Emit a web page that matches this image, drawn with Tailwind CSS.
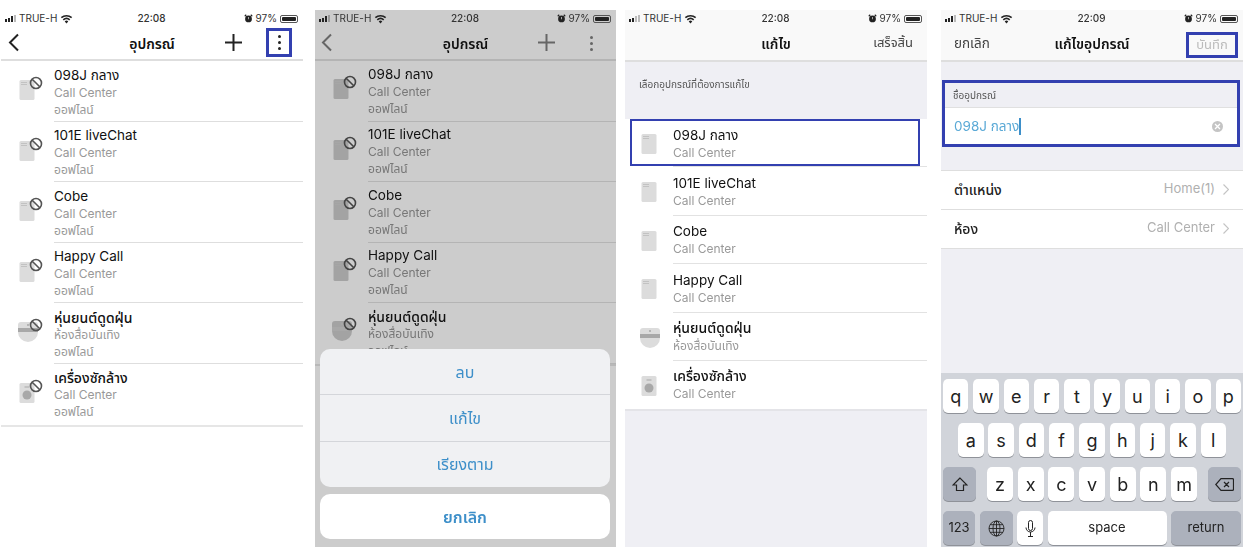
<!DOCTYPE html>
<html lang="th">
<head>
<meta charset="UTF-8">
<title>อุปกรณ์</title>
<script src="https://cdn.jsdelivr.net/npm/@tailwindcss/browser@4"></script>
</head>
<body class="bg-white overflow-hidden font-['Inter','Noto_Sans','Noto_Sans_Thai','DejaVu_Sans',sans-serif]">
<svg class="absolute w-0 h-0">
  <symbol id="plug" viewBox="0 0 24 24">
    <rect x="3.500" y="2" width="15" height="20" rx="1.500" fill="currentColor"/>
    <path d="M5.500 4.500h1M7.500 4.500h1M9.500 4.500h1M5.500 6.500h1M7.500 6.500h1M9.500 6.500h1" stroke="#a8a8a8" stroke-width="1"/>
  </symbol>
  <symbol id="robot" viewBox="0 0 24 24">
    <path d="M2 5a3 3 0 0 1 3-3h14a3 3 0 0 1 3 3v7a10 10 0 0 1-20 0z" fill="currentColor"/>
    <rect x="2" y="8" width="20" height="4" fill="#a8a8a8"/>
    <circle cx="12" cy="5" r="1" fill="#a8a8a8"/>
  </symbol>
  <symbol id="washer" viewBox="0 0 24 24">
    <rect x="3.500" y="2" width="15" height="20" rx="1.500" fill="currentColor"/>
    <circle cx="11" cy="14" r="4.500" fill="#a8a8a8"/>
    <path d="M8.500 6h5" stroke="#a8a8a8" stroke-width="1"/>
  </symbol>
  <symbol id="ban" viewBox="0 0 14 14">
    <circle cx="7" cy="7" r="5.500" fill="none" stroke="currentColor" stroke-width="1.600"/>
    <path d="M3.200 3.200l7.600 7.600" stroke="currentColor" stroke-width="1.600"/>
  </symbol>
  <symbol id="wifi" viewBox="0 0 16 12">
    <path d="M8 11.500L5.800 9a3.200 3.200 0 0 1 4.400 0zM4.700 7.800L3.400 6.300a7 7 0 0 1 9.200 0l-1.300 1.500a5 5 0 0 0-6.600 0zM2.300 5.100L1 3.600a10.700 10.700 0 0 1 14 0l-1.300 1.500a8.700 8.700 0 0 0-11.400 0z" fill="currentColor"/>
  </symbol>
  <symbol id="alarm" viewBox="0 0 12 12">
    <circle cx="6" cy="6.500" r="4.500" fill="currentColor"/>
    <path d="M1 3l2-2M11 3L9 1" stroke="currentColor" stroke-width="1.500"/>
    <path d="M6 4v3" stroke="#fff" stroke-width=".8"/>
  </symbol>
</svg>

<div class="flex items-start pt-[10px] pl-[1px] h-[551px] blur-[0.4px]">

  <!-- Screen 1: device list -->
  <section class="w-[302px] h-[537px] bg-white shrink-0">
    <div class="h-[17px] pl-[4px] pr-[5px] flex items-center justify-between text-[10px] text-[#333]">
      <div class="flex items-center gap-[3px] w-[100px]">
        <div class="flex items-end gap-[1px] h-[7px]"><i class="w-[2px] h-[3px] bg-[#222]"></i><i class="w-[2px] h-[4px] bg-[#222]"></i><i class="w-[2px] h-[6px] bg-[#222]"></i><i class="w-[2px] h-[7px] bg-[#bbb]"></i></div>
        <span>TRUE-H</span>
        <svg class="w-[13px] h-[10px] text-[#222]"><use href="#wifi"/></svg>
      </div>
      <span class="font-medium">22:08</span>
      <div class="flex items-center justify-end gap-[3px] w-[100px]">
        <svg class="w-[9px] h-[9px] text-[#222]"><use href="#alarm"/></svg>
        <span>97%</span>
        <div class="w-[18px] h-[8px] border border-[#555] rounded-[2px] p-[1px]"><div class="h-full bg-[#222] rounded-[1px]"></div></div>
      </div>
    </div>
    <div class="relative h-[34px] flex items-center justify-center border-b-2 border-[#dedede] text-[14px] font-semibold text-[#111]">
      <svg class="absolute left-[7px] top-[6px] w-[11px] h-[19px]" viewBox="0 0 11 19" fill="none" stroke="#222" stroke-width="2"><path d="M10 1.500L2 9.500l8 8"/></svg>
      <span>อุปกรณ์</span>
      <svg class="absolute left-[224px] top-[7px] w-[17px] h-[17px]" viewBox="0 0 17 17" stroke="#222" stroke-width="2"><path d="M8.500 0v17M0 8.500h17"/></svg>
      <div class="absolute left-[265px] top-[1px] w-[26px] h-[29px] border-[3px] border-[#3340b0] flex flex-col items-center justify-center gap-[3px]">
        <i class="w-[3px] h-[3px] rounded-full bg-[#222]"></i><i class="w-[3px] h-[3px] rounded-full bg-[#222]"></i><i class="w-[3px] h-[3px] rounded-full bg-[#222]"></i>
      </div>
    </div>
    <ul class="border-b-2 border-[#e6e6e6]">
      <li class="flex h-[60.600px]"><div class="relative w-[53px] shrink-0 text-[#dcdcdc]"><svg class="absolute left-[15px] top-[17px] w-[24px] h-[24px]"><use href="#plug"/></svg><svg class="absolute left-[28px] top-[15px] w-[14px] h-[14px] text-[#555]"><use href="#ban"/></svg></div><div class="flex-1 border-b border-[#dedede] pt-[5.500px] leading-[17px]"><p class="text-[13.500px] text-[#111]">098J กลาง</p><p class="text-[12px] text-[#999]">Call Center</p><p class="text-[12px] text-[#999]">ออฟไลน์</p></div></li>
      <li class="flex h-[60.600px]"><div class="relative w-[53px] shrink-0 text-[#dcdcdc]"><svg class="absolute left-[15px] top-[17px] w-[24px] h-[24px]"><use href="#plug"/></svg><svg class="absolute left-[28px] top-[15px] w-[14px] h-[14px] text-[#555]"><use href="#ban"/></svg></div><div class="flex-1 border-b border-[#dedede] pt-[5.500px] leading-[17px]"><p class="text-[13.500px] text-[#111]">101E liveChat</p><p class="text-[12px] text-[#999]">Call Center</p><p class="text-[12px] text-[#999]">ออฟไลน์</p></div></li>
      <li class="flex h-[60.600px]"><div class="relative w-[53px] shrink-0 text-[#dcdcdc]"><svg class="absolute left-[15px] top-[17px] w-[24px] h-[24px]"><use href="#plug"/></svg><svg class="absolute left-[28px] top-[15px] w-[14px] h-[14px] text-[#555]"><use href="#ban"/></svg></div><div class="flex-1 border-b border-[#dedede] pt-[5.500px] leading-[17px]"><p class="text-[13.500px] text-[#111]">Cobe</p><p class="text-[12px] text-[#999]">Call Center</p><p class="text-[12px] text-[#999]">ออฟไลน์</p></div></li>
      <li class="flex h-[60.600px]"><div class="relative w-[53px] shrink-0 text-[#dcdcdc]"><svg class="absolute left-[15px] top-[17px] w-[24px] h-[24px]"><use href="#plug"/></svg><svg class="absolute left-[28px] top-[15px] w-[14px] h-[14px] text-[#555]"><use href="#ban"/></svg></div><div class="flex-1 border-b border-[#dedede] pt-[5.500px] leading-[17px]"><p class="text-[13.500px] text-[#111]">Happy Call</p><p class="text-[12px] text-[#999]">Call Center</p><p class="text-[12px] text-[#999]">ออฟไลน์</p></div></li>
      <li class="flex h-[60.600px]"><div class="relative w-[53px] shrink-0 text-[#dcdcdc]"><svg class="absolute left-[15px] top-[17px] w-[24px] h-[24px]"><use href="#robot"/></svg><svg class="absolute left-[28px] top-[15px] w-[14px] h-[14px] text-[#555]"><use href="#ban"/></svg></div><div class="flex-1 border-b border-[#dedede] pt-[5.500px] leading-[17px]"><p class="text-[14px] font-medium text-[#111]">หุ่นยนต์ดูดฝุ่น</p><p class="text-[12px] text-[#999]">ห้องสื่อบันเทิง</p><p class="text-[12px] text-[#999]">ออฟไลน์</p></div></li>
      <li class="flex h-[60.600px]"><div class="relative w-[53px] shrink-0 text-[#dcdcdc]"><svg class="absolute left-[15px] top-[17px] w-[24px] h-[24px]"><use href="#washer"/></svg><svg class="absolute left-[28px] top-[15px] w-[14px] h-[14px] text-[#555]"><use href="#ban"/></svg></div><div class="flex-1 pt-[5.500px] leading-[17px]"><p class="text-[14px] font-medium text-[#111]">เครื่องซักล้าง</p><p class="text-[12px] text-[#999]">Call Center</p><p class="text-[12px] text-[#999]">ออฟไลน์</p></div></li>
    </ul>
  </section>

  <!-- Screen 2: action sheet over dimmed list -->
  <section class="relative ml-[12px] w-[301px] h-[537px] bg-[#cccccc] shrink-0 overflow-hidden">
    <div class="h-[17px] pl-[4px] pr-[5px] flex items-center justify-between text-[10px] text-[#333]">
      <div class="flex items-center gap-[3px] w-[100px]">
        <div class="flex items-end gap-[1px] h-[7px]"><i class="w-[2px] h-[3px] bg-[#222]"></i><i class="w-[2px] h-[4px] bg-[#222]"></i><i class="w-[2px] h-[6px] bg-[#222]"></i><i class="w-[2px] h-[7px] bg-[#999]"></i></div>
        <span>TRUE-H</span>
        <svg class="w-[13px] h-[10px] text-[#222]"><use href="#wifi"/></svg>
      </div>
      <span class="font-medium">22:08</span>
      <div class="flex items-center justify-end gap-[3px] w-[100px]">
        <svg class="w-[9px] h-[9px] text-[#222]"><use href="#alarm"/></svg>
        <span>97%</span>
        <div class="w-[18px] h-[8px] border border-[#555] rounded-[2px] p-[1px]"><div class="h-full bg-[#222] rounded-[1px]"></div></div>
      </div>
    </div>
    <div class="relative h-[34px] flex items-center justify-center border-b-2 border-[#b4b4b4] text-[14px] font-semibold text-[#111]">
      <svg class="absolute left-[6px] top-[6px] w-[11px] h-[19px]" viewBox="0 0 11 19" fill="none" stroke="#666" stroke-width="2"><path d="M10 1.500L2 9.500l8 8"/></svg>
      <span>อุปกรณ์</span>
      <svg class="absolute left-[223px] top-[7px] w-[17px] h-[17px]" viewBox="0 0 17 17" stroke="#666" stroke-width="2"><path d="M8.500 0v17M0 8.500h17"/></svg>
      <div class="absolute left-[275px] top-[9px] flex flex-col items-center gap-[3px]">
        <i class="w-[3px] h-[3px] rounded-full bg-[#666]"></i><i class="w-[3px] h-[3px] rounded-full bg-[#666]"></i><i class="w-[3px] h-[3px] rounded-full bg-[#666]"></i>
      </div>
    </div>
    <ul class="border-b-2 border-[#b8b8b8]">
      <li class="flex h-[60.500px]"><div class="relative w-[53px] shrink-0 text-[#a3a3a3]"><svg class="absolute left-[15px] top-[16px] w-[24px] h-[24px]"><use href="#plug"/></svg><svg class="absolute left-[28px] top-[14px] w-[14px] h-[14px] text-[#444]"><use href="#ban"/></svg></div><div class="flex-1 border-b border-[#b4b4b4] pt-[4.500px] leading-[17px]"><p class="text-[13.500px] text-[#111]">098J กลาง</p><p class="text-[12px] text-[#777]">Call Center</p><p class="text-[12px] text-[#777]">ออฟไลน์</p></div></li>
      <li class="flex h-[60.500px]"><div class="relative w-[53px] shrink-0 text-[#a3a3a3]"><svg class="absolute left-[15px] top-[16px] w-[24px] h-[24px]"><use href="#plug"/></svg><svg class="absolute left-[28px] top-[14px] w-[14px] h-[14px] text-[#444]"><use href="#ban"/></svg></div><div class="flex-1 border-b border-[#b4b4b4] pt-[4.500px] leading-[17px]"><p class="text-[13.500px] text-[#111]">101E liveChat</p><p class="text-[12px] text-[#777]">Call Center</p><p class="text-[12px] text-[#777]">ออฟไลน์</p></div></li>
      <li class="flex h-[60.500px]"><div class="relative w-[53px] shrink-0 text-[#a3a3a3]"><svg class="absolute left-[15px] top-[16px] w-[24px] h-[24px]"><use href="#plug"/></svg><svg class="absolute left-[28px] top-[14px] w-[14px] h-[14px] text-[#444]"><use href="#ban"/></svg></div><div class="flex-1 border-b border-[#b4b4b4] pt-[4.500px] leading-[17px]"><p class="text-[13.500px] text-[#111]">Cobe</p><p class="text-[12px] text-[#777]">Call Center</p><p class="text-[12px] text-[#777]">ออฟไลน์</p></div></li>
      <li class="flex h-[60.500px]"><div class="relative w-[53px] shrink-0 text-[#a3a3a3]"><svg class="absolute left-[15px] top-[16px] w-[24px] h-[24px]"><use href="#plug"/></svg><svg class="absolute left-[28px] top-[14px] w-[14px] h-[14px] text-[#444]"><use href="#ban"/></svg></div><div class="flex-1 border-b border-[#b4b4b4] pt-[4.500px] leading-[17px]"><p class="text-[13.500px] text-[#111]">Happy Call</p><p class="text-[12px] text-[#777]">Call Center</p><p class="text-[12px] text-[#777]">ออฟไลน์</p></div></li>
      <li class="flex h-[60.500px]"><div class="relative w-[53px] shrink-0 text-[#a3a3a3]"><svg class="absolute left-[15px] top-[16px] w-[24px] h-[24px]"><use href="#robot"/></svg><svg class="absolute left-[28px] top-[14px] w-[14px] h-[14px] text-[#444]"><use href="#ban"/></svg></div><div class="flex-1 border-b border-[#b4b4b4] pt-[4.500px] leading-[17px]"><p class="text-[14px] font-medium text-[#111]">หุ่นยนต์ดูดฝุ่น</p><p class="text-[12px] text-[#777]">ห้องสื่อบันเทิง</p><p class="text-[12px] text-[#777]">ออฟไลน์</p></div></li>
    </ul>
    <div class="absolute left-[5px] top-[339px] w-[290px]">
      <div class="h-[138px] rounded-[10px] bg-[#f0f1f3] flex flex-col divide-y divide-[#d4d6da] text-[16px] text-[#3d8fc9]">
        <div class="flex-1 flex items-center justify-center">ลบ</div>
        <div class="flex-1 flex items-center justify-center">แก้ไข</div>
        <div class="flex-1 flex items-center justify-center">เรียงตาม</div>
      </div>
      <div class="mt-[7px] h-[45px] rounded-[10px] bg-white flex items-center justify-center text-[16px] font-semibold text-[#3d8fc9]">ยกเลิก</div>
    </div>
  </section>

  <!-- Screen 3: choose device to edit -->
  <section class="relative ml-[9px] w-[302px] h-[537px] bg-[#efeff4] shrink-0">
    <div class="bg-[#f9f9f9]">
      <div class="h-[17px] pl-[4px] pr-[5px] flex items-center justify-between text-[10px] text-[#333]">
        <div class="flex items-center gap-[3px] w-[100px]">
          <div class="flex items-end gap-[1px] h-[7px]"><i class="w-[2px] h-[3px] bg-[#222]"></i><i class="w-[2px] h-[4px] bg-[#222]"></i><i class="w-[2px] h-[6px] bg-[#bbb]"></i><i class="w-[2px] h-[7px] bg-[#bbb]"></i></div>
          <span>TRUE-H</span>
          <svg class="w-[13px] h-[10px] text-[#222]"><use href="#wifi"/></svg>
        </div>
        <span class="font-medium">22:08</span>
        <div class="flex items-center justify-end gap-[3px] w-[100px]">
          <svg class="w-[9px] h-[9px] text-[#222]"><use href="#alarm"/></svg>
          <span>97%</span>
          <div class="w-[18px] h-[8px] border border-[#555] rounded-[2px] p-[1px]"><div class="h-full bg-[#222] rounded-[1px]"></div></div>
        </div>
      </div>
      <div class="relative h-[35px] flex items-center justify-center border-b-2 border-[#dedede] text-[14px] font-semibold text-[#111]">
        <span>แก้ไข</span>
        <span class="absolute right-[14px] top-[6px] text-[13px] font-normal text-[#444]">เสร็จสิ้น</span>
      </div>
    </div>
    <p class="h-[57px] pl-[14px] pt-[15px] text-[10px] text-[#555]">เลือกอุปกรณ์ที่ต้องการแก้ไข</p>
    <ul class="bg-white border-b-2 border-[#e4e4e8]">
      <li class="flex h-[48.400px]"><div class="relative w-[48px] shrink-0 text-[#dcdcdc]"><svg class="absolute left-[13px] top-[13px] w-[24px] h-[24px]"><use href="#plug"/></svg></div><div class="flex-1 border-b border-[#e2e2e2] pt-[6.500px] leading-[18px]"><p class="text-[13.500px] text-[#111]">098J กลาง</p><p class="text-[12px] text-[#999]">Call Center</p></div></li>
      <li class="flex h-[48.400px]"><div class="relative w-[48px] shrink-0 text-[#dcdcdc]"><svg class="absolute left-[13px] top-[13px] w-[24px] h-[24px]"><use href="#plug"/></svg></div><div class="flex-1 border-b border-[#e2e2e2] pt-[6.500px] leading-[18px]"><p class="text-[13.500px] text-[#111]">101E liveChat</p><p class="text-[12px] text-[#999]">Call Center</p></div></li>
      <li class="flex h-[48.400px]"><div class="relative w-[48px] shrink-0 text-[#dcdcdc]"><svg class="absolute left-[13px] top-[13px] w-[24px] h-[24px]"><use href="#plug"/></svg></div><div class="flex-1 border-b border-[#e2e2e2] pt-[6.500px] leading-[18px]"><p class="text-[13.500px] text-[#111]">Cobe</p><p class="text-[12px] text-[#999]">Call Center</p></div></li>
      <li class="flex h-[48.400px]"><div class="relative w-[48px] shrink-0 text-[#dcdcdc]"><svg class="absolute left-[13px] top-[13px] w-[24px] h-[24px]"><use href="#plug"/></svg></div><div class="flex-1 border-b border-[#e2e2e2] pt-[6.500px] leading-[18px]"><p class="text-[13.500px] text-[#111]">Happy Call</p><p class="text-[12px] text-[#999]">Call Center</p></div></li>
      <li class="flex h-[48.400px]"><div class="relative w-[48px] shrink-0 text-[#dcdcdc]"><svg class="absolute left-[13px] top-[13px] w-[24px] h-[24px]"><use href="#robot"/></svg></div><div class="flex-1 border-b border-[#e2e2e2] pt-[6.500px] leading-[18px]"><p class="text-[14px] font-medium text-[#111]">หุ่นยนต์ดูดฝุ่น</p><p class="text-[12px] text-[#999]">ห้องสื่อบันเทิง</p></div></li>
      <li class="flex h-[48.400px]"><div class="relative w-[48px] shrink-0 text-[#dcdcdc]"><svg class="absolute left-[13px] top-[13px] w-[24px] h-[24px]"><use href="#washer"/></svg></div><div class="flex-1 pt-[6.500px] leading-[18px]"><p class="text-[14px] font-medium text-[#111]">เครื่องซักล้าง</p><p class="text-[12px] text-[#999]">Call Center</p></div></li>
    </ul>
    <div class="absolute left-[5px] top-[109px] w-[290px] h-[47px] border-[2px] border-[#3340b0]"></div>
  </section>

  <!-- Screen 4: edit device -->
  <section class="relative ml-[14px] w-[302px] h-[537px] bg-[#efeff4] shrink-0 flex flex-col">
    <div class="bg-[#f9f9f9]">
      <div class="h-[17px] pl-[4px] pr-[5px] flex items-center justify-between text-[10px] text-[#333]">
        <div class="flex items-center gap-[3px] w-[100px]">
          <div class="flex items-end gap-[1px] h-[7px]"><i class="w-[2px] h-[3px] bg-[#222]"></i><i class="w-[2px] h-[4px] bg-[#222]"></i><i class="w-[2px] h-[6px] bg-[#222]"></i><i class="w-[2px] h-[7px] bg-[#bbb]"></i></div>
          <span>TRUE-H</span>
          <svg class="w-[13px] h-[10px] text-[#222]"><use href="#wifi"/></svg>
        </div>
        <span class="font-medium">22:09</span>
        <div class="flex items-center justify-end gap-[3px] w-[100px]">
          <svg class="w-[9px] h-[9px] text-[#222]"><use href="#alarm"/></svg>
          <span>97%</span>
          <div class="w-[18px] h-[8px] border border-[#555] rounded-[2px] p-[1px]"><div class="h-full bg-[#222] rounded-[1px]"></div></div>
        </div>
      </div>
      <div class="relative h-[35px] flex items-center justify-center border-b-2 border-[#dedede] text-[14px] font-semibold text-[#111]">
        <span class="absolute left-[13px] top-[6px] text-[13.500px] font-normal text-[#444]">ยกเลิก</span>
        <span>แก้ไขอุปกรณ์</span>
        <span class="absolute left-[245px] top-[5px] w-[52px] h-[26px] border-[3px] border-[#3340b0] flex items-center justify-center text-[13px] font-normal text-[#bbb]">บันทึก</span>
      </div>
    </div>
    <div class="mt-[18px] ml-[1px] mr-[3px] h-[67px] border-[3px] border-[#3340b0]">
      <div class="h-[25px] pl-[8px] flex items-center text-[10px] text-[#555] border-b border-[#e0e0e0]">ชื่ออุปกรณ์</div>
      <div class="h-[36px] bg-white pl-[9px] pr-[14px] flex items-center justify-between">
        <div class="flex items-center text-[13.500px] text-[#5aa9d6]"><span>098J กลาง</span><i class="w-[1.500px] h-[17px] bg-[#3d8fc9]"></i></div>
        <div class="w-[11px] h-[11px] rounded-full bg-[#c4c4c4] flex items-center justify-center text-white"><svg class="w-[7px] h-[7px]" viewBox="0 0 7 7" stroke="#fff" stroke-width="1.300"><path d="M1 1l5 5M6 1L1 6"/></svg></div>
      </div>
    </div>
    <div class="mt-[23px] bg-white border-y border-[#dedede] text-[14px]">
      <div class="h-[39px] pl-[13px] pr-[14px] pb-[2px] flex items-center justify-between border-b border-[#dedede]"><span class="font-medium text-[#222]">ตำแหน่ง</span><span class="flex items-center gap-[8px] text-[13px] text-[#b0b0b0]">Home(1)<svg class="w-[6px] h-[11px]" viewBox="0 0 6 11" fill="none" stroke="#c4c4c4" stroke-width="1.200"><path d="M.5.500l5 5-5 5"/></svg></span></div>
      <div class="h-[38px] pl-[13px] pr-[14px] pb-[2px] flex items-center justify-between"><span class="font-medium text-[#222]">ห้อง</span><span class="flex items-center gap-[8px] text-[13px] text-[#b0b0b0]">Call Center<svg class="w-[6px] h-[11px]" viewBox="0 0 6 11" fill="none" stroke="#c4c4c4" stroke-width="1.200"><path d="M.5.500l5 5-5 5"/></svg></span></div>
    </div>
    <!-- keyboard -->
    <div class="mt-auto h-[174px] bg-[#d1d4da] pt-[6px] pl-[2px] pr-[2px] flex flex-col gap-[10px] text-[#222]">
      <div class="flex gap-[4.800px] h-[34px] text-[18px]">
        <span class="flex-1 bg-white rounded-[5px] shadow-[0_1px_0_#8f9299] flex items-center justify-center">q</span><span class="flex-1 bg-white rounded-[5px] shadow-[0_1px_0_#8f9299] flex items-center justify-center">w</span><span class="flex-1 bg-white rounded-[5px] shadow-[0_1px_0_#8f9299] flex items-center justify-center">e</span><span class="flex-1 bg-white rounded-[5px] shadow-[0_1px_0_#8f9299] flex items-center justify-center">r</span><span class="flex-1 bg-white rounded-[5px] shadow-[0_1px_0_#8f9299] flex items-center justify-center">t</span><span class="flex-1 bg-white rounded-[5px] shadow-[0_1px_0_#8f9299] flex items-center justify-center">y</span><span class="flex-1 bg-white rounded-[5px] shadow-[0_1px_0_#8f9299] flex items-center justify-center">u</span><span class="flex-1 bg-white rounded-[5px] shadow-[0_1px_0_#8f9299] flex items-center justify-center">i</span><span class="flex-1 bg-white rounded-[5px] shadow-[0_1px_0_#8f9299] flex items-center justify-center">o</span><span class="flex-1 bg-white rounded-[5px] shadow-[0_1px_0_#8f9299] flex items-center justify-center">p</span>
      </div>
      <div class="flex gap-[4.800px] h-[34px] px-[15px] text-[18px]">
        <span class="flex-1 bg-white rounded-[5px] shadow-[0_1px_0_#8f9299] flex items-center justify-center">a</span><span class="flex-1 bg-white rounded-[5px] shadow-[0_1px_0_#8f9299] flex items-center justify-center">s</span><span class="flex-1 bg-white rounded-[5px] shadow-[0_1px_0_#8f9299] flex items-center justify-center">d</span><span class="flex-1 bg-white rounded-[5px] shadow-[0_1px_0_#8f9299] flex items-center justify-center">f</span><span class="flex-1 bg-white rounded-[5px] shadow-[0_1px_0_#8f9299] flex items-center justify-center">g</span><span class="flex-1 bg-white rounded-[5px] shadow-[0_1px_0_#8f9299] flex items-center justify-center">h</span><span class="flex-1 bg-white rounded-[5px] shadow-[0_1px_0_#8f9299] flex items-center justify-center">j</span><span class="flex-1 bg-white rounded-[5px] shadow-[0_1px_0_#8f9299] flex items-center justify-center">k</span><span class="flex-1 bg-white rounded-[5px] shadow-[0_1px_0_#8f9299] flex items-center justify-center">l</span>
      </div>
      <div class="flex h-[34px] text-[18px]">
        <span class="w-[33px] bg-[#acb1bc] rounded-[5px] shadow-[0_1px_0_#8f9299] flex items-center justify-center"><svg class="w-[16px] h-[15px]" viewBox="0 0 16 15" fill="none" stroke="#222" stroke-width="1.200"><path d="M8 1L1 8h3.500v5.500h7V8H15z"/></svg></span>
        <div class="flex-1 flex gap-[4.800px] px-[11px]">
          <span class="flex-1 bg-white rounded-[5px] shadow-[0_1px_0_#8f9299] flex items-center justify-center">z</span><span class="flex-1 bg-white rounded-[5px] shadow-[0_1px_0_#8f9299] flex items-center justify-center">x</span><span class="flex-1 bg-white rounded-[5px] shadow-[0_1px_0_#8f9299] flex items-center justify-center">c</span><span class="flex-1 bg-white rounded-[5px] shadow-[0_1px_0_#8f9299] flex items-center justify-center">v</span><span class="flex-1 bg-white rounded-[5px] shadow-[0_1px_0_#8f9299] flex items-center justify-center">b</span><span class="flex-1 bg-white rounded-[5px] shadow-[0_1px_0_#8f9299] flex items-center justify-center">n</span><span class="flex-1 bg-white rounded-[5px] shadow-[0_1px_0_#8f9299] flex items-center justify-center">m</span>
        </div>
        <span class="w-[33px] bg-[#acb1bc] rounded-[5px] shadow-[0_1px_0_#8f9299] flex items-center justify-center"><svg class="w-[19px] h-[13px]" viewBox="0 0 19 13" fill="none" stroke="#222" stroke-width="1.200"><path d="M6 .700h11.500a1 1 0 0 1 1 1v9.600a1 1 0 0 1-1 1H6L.8 6.500zM9 4l5 5M14 4L9 9"/></svg></span>
      </div>
      <div class="flex gap-[4.500px] h-[34px] text-[13px]">
        <span class="w-[32px] bg-[#acb1bc] rounded-[5px] shadow-[0_1px_0_#8f9299] flex items-center justify-center">123</span>
        <span class="w-[33px] bg-[#acb1bc] rounded-[5px] shadow-[0_1px_0_#8f9299] flex items-center justify-center"><svg class="w-[17px] h-[17px]" viewBox="0 0 17 17" fill="none" stroke="#222" stroke-width=".9"><circle cx="8.500" cy="8.500" r="7.500"/><ellipse cx="8.500" cy="8.500" rx="3.500" ry="7.500"/><path d="M8.500 1v15M1 8.500h15M2 4.700h13M2 12.300h13"/></svg></span>
        <span class="w-[26px] bg-white rounded-[5px] shadow-[0_1px_0_#8f9299] flex items-center justify-center"><svg class="w-[11px] h-[17px]" viewBox="0 0 11 17" fill="none" stroke="#222" stroke-width="1"><rect x="3.500" y=".5" width="4" height="10" rx="2"/><path d="M1 7.500a4.500 4.500 0 0 0 9 0M5.500 12v4M3 16.500h5"/></svg></span>
        <span class="flex-1 bg-white rounded-[5px] shadow-[0_1px_0_#8f9299] flex items-center justify-center">space</span>
        <span class="w-[70px] bg-[#acb1bc] rounded-[5px] shadow-[0_1px_0_#8f9299] flex items-center justify-center">return</span>
      </div>
    </div>
  </section>
</div>
</body>
</html>
